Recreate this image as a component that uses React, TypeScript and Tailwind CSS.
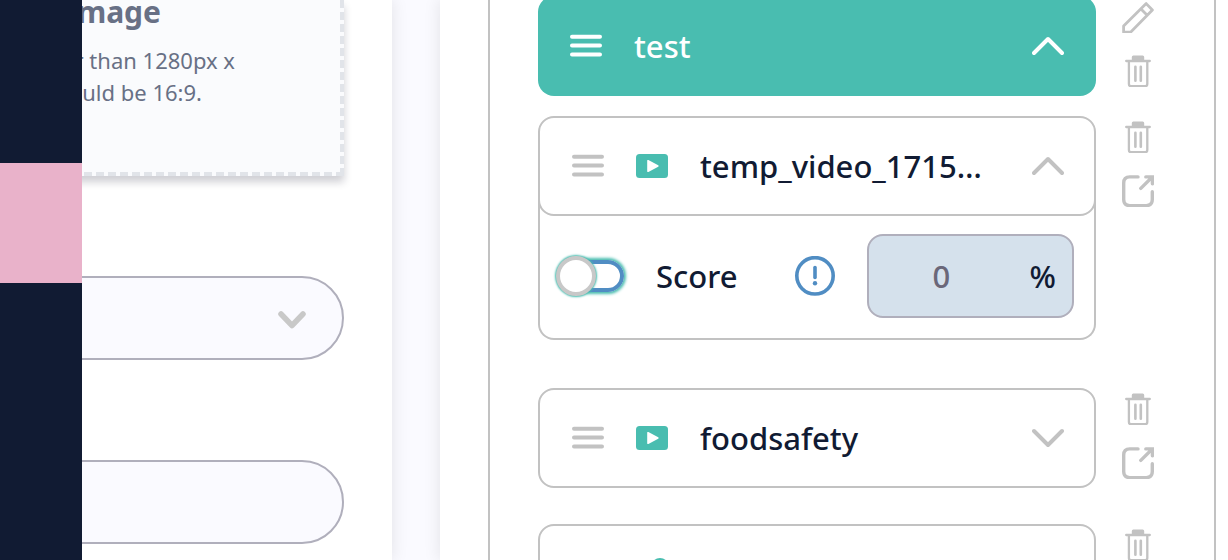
import type { ReactNode } from "react";

function Menu() {
  return (
    <svg width="32" height="24" viewBox="0 0 32 24" fill="none" stroke="currentColor" strokeWidth="4" strokeLinecap="round" className="shrink-0">
      <path d="M2 2.7H30M2 11.6H30M2 20.5H30" />
    </svg>
  );
}

function Video() {
  return (
    <svg width="32" height="24" viewBox="0 0 32 24" className="shrink-0">
      <rect width="32" height="24" rx="3.5" fill="#49bdb0" />
      <path d="M11.2 6.8v10.4a.8.8 0 0 0 1.2.7l9.8-5.2a.8.8 0 0 0 0-1.4l-9.8-5.2a.8.8 0 0 0-1.2.7z" fill="#fff" />
    </svg>
  );
}

function Chevron({ up }: { up?: boolean }) {
  return (
    <svg width="32" height="20" viewBox="0 0 32 20" fill="none" stroke="currentColor" strokeWidth="4" strokeLinecap="round" strokeLinejoin="round">
      <path d={up ? "M2 17L16 3L30 17" : "M2 3L16 17L30 3"} />
    </svg>
  );
}

function Pencil() {
  return (
    <svg width="32" height="32" viewBox="0 0 32 32" fill="none" stroke="currentColor" strokeWidth="2.8" strokeLinejoin="round">
      <path d="M24.2 2.6L30.4 9L8.6 31.2H1.6V25ZM19 8L25.2 14.2" />
    </svg>
  );
}

function Trash() {
  return (
    <svg width="32" height="32" viewBox="0 0 32 32" fill="none" stroke="currentColor" strokeWidth="2.3" strokeLinecap="round">
      <path d="M9.8 5.5V2Q9.8 .5 11.3 .5H20.7Q22.2 .5 22.2 2V5.5Z" fill="currentColor" stroke="none" />
      <path d="M4.2 6H27.8M6.9 6V29Q6.9 31.2 9 31.2H23.2Q25.3 31.2 25.3 29V6" />
      <path d="M13.4 11.8V25.8M18.8 11.8V25.8" strokeWidth="2.6" />
    </svg>
  );
}

function External() {
  return (
    <svg width="32" height="32" viewBox="0 0 32 32" fill="none" stroke="currentColor" strokeWidth="3.4" strokeLinecap="round">
      <path d="M16 1.9H7.8Q1.7 1.9 1.7 8V24.6Q1.7 30.6 7.8 30.6H24.2Q30.3 30.6 30.3 24.6V16.8M23.8 1.9H30.4V8.8M30 2.3L18.8 13.4" />
    </svg>
  );
}

function IconButton({ label, children }: { label: string; children: ReactNode }) {
  return (
    <button type="button" aria-label={label} className="block size-8 text-[#c2c2c2]">
      {children}
    </button>
  );
}

function Lesson({ title, open, icon }: { title: string; open?: boolean; icon: ReactNode }) {
  return (
    <div className="flex h-[100px] items-center rounded-2xl border-2 border-[#c2c2c2] bg-white pr-[30px] pl-8 text-[#c2c2c2]">
      <Menu />
      <span className="ml-8 flex w-8 shrink-0 justify-center">{icon}</span>
      <span className="mr-9 ml-8 min-w-0 flex-1 truncate text-[#111b33]">{title}</span>
      <button type="button" aria-label={open ? "Collapse" : "Expand"} className="shrink-0">
        <Chevron up={open} />
      </button>
    </div>
  );
}

function Row({ children, actions }: { children: ReactNode; actions: ReactNode }) {
  return (
    <div className="flex items-start gap-[26px]">
      <div className="min-w-0 flex-1">{children}</div>
      <div className="flex flex-col gap-[22px] pt-[5px]">{actions}</div>
    </div>
  );
}

const fieldClass = "h-[84px] w-full rounded-full border-2 border-[#b0afbc] bg-[#fafaff] px-10";

export default function App() {
  return (
    <div className="flex h-screen overflow-hidden bg-[#fafaff] font-['Noto_Sans',sans-serif] text-[31px] leading-10 font-medium text-[#111b33]">
      <nav className="relative z-10 w-[82px] shrink-0 bg-[#111b33] pt-[163px]">
        <a href="#course" aria-label="Course" className="block h-[120px] bg-[#e9b2ca]" />
      </nav>

      <section className="flex w-[310px] shrink-0 justify-end bg-white pr-12 shadow-[0_0_16px_rgba(0,0,0,0.1)]">
        <div className="w-[380px] shrink-0">
          <div className="flex h-44 flex-col items-end border-4 border-t-0 border-dashed border-[#e1e4e9] bg-[#fafbfd] text-[22px] leading-8 font-normal whitespace-nowrap text-[#687085] shadow-[0_6px_8px_rgba(17,17,40,0.2)]">
            <h2 className="-mt-2 mb-3 pr-[179px] text-[30px] leading-10 font-bold">Image</h2>
            <p className="pr-[105px]">Larger than 1280px x</p>
            <p className="pr-[138px]">should be 16:9.</p>
          </div>
          <div className="relative mt-[100px]">
            <select aria-label="Category" className={fieldClass + " block appearance-none"} />
            <svg width="28" height="18" viewBox="0 0 28 18" fill="none" stroke="#c8c8c8" strokeWidth="5.5" strokeLinecap="round" strokeLinejoin="round" className="pointer-events-none absolute top-[35px] right-[38px]">
              <path d="M3 3L14 14.5L25 3" />
            </svg>
          </div>
          <input type="text" aria-label="Title" className={fieldClass + " mt-[100px] block"} />
        </div>
      </section>

      <main className="ml-12 min-w-0 flex-1 bg-white pr-3 pl-12 shadow-[0_0_16px_rgba(0,0,0,0.1)]">
        <div className="h-full overflow-hidden border-x-2 border-[#c2c2c2] pr-[60px] pl-12">
          <div className="-mt-1">
            <Row actions={<><IconButton label="Edit"><Pencil /></IconButton><IconButton label="Delete"><Trash /></IconButton></>}>
              <div className="flex h-[100px] items-center rounded-2xl bg-[#49bdb0] px-8 text-white">
                <Menu />
                <span className="ml-8 flex-1">test</span>
                <button type="button" aria-label="Collapse section"><Chevron up /></button>
              </div>
            </Row>
          </div>

          <div className="mt-5">
            <Row actions={<><IconButton label="Delete"><Trash /></IconButton><IconButton label="Open"><External /></IconButton></>}>
              <Lesson title="temp_video_1715763" open icon={<Video />} />
              <div className="-mt-4 flex items-center rounded-b-2xl border-2 border-t-0 border-[#c2c2c2] pt-[34px] pr-5 pb-5 pl-4">
                <label className="flex flex-1 items-center gap-8">
                  <span className="relative flex h-10 w-[68px] items-center">
                    <input type="checkbox" role="switch" className="peer sr-only" />
                    <span className="ml-3 h-8 flex-1 rounded-full border-4 border-[#508dc3] shadow-[0_0_3px_2px_#49bdb0]" />
                    <span className="absolute left-0 size-10 rounded-full border-4 border-[#c8c8c8] bg-white shadow-[0_0_2px_1px_#49bdb0]" />
                  </span>
                  Score
                </label>
                <button type="button" aria-label="About the score">
                  <svg width="40" height="40" viewBox="0 0 40 40" fill="none" stroke="#508dc3" strokeWidth="3.6" strokeLinecap="round">
                    <circle cx="20" cy="19.8" r="18.2" />
                    <path d="M20 11.5V21.5" />
                    <circle cx="20" cy="27.2" r="2.2" fill="#508dc3" stroke="none" />
                  </svg>
                </button>
                <div className="ml-8 flex h-[84px] w-[207px] items-center rounded-2xl border-2 border-[#b0afbc] bg-[#d5e1ec] pr-4">
                  <input type="text" aria-label="Score percent" defaultValue="0" className="min-w-0 flex-1 bg-transparent pr-4 text-center text-[#6a6779]" />
                  <span>%</span>
                </div>
              </div>
            </Row>
          </div>

          <div className="mt-12">
            <Row actions={<><IconButton label="Delete"><Trash /></IconButton><IconButton label="Open"><External /></IconButton></>}>
              <Lesson title="foodsafety" icon={<Video />} />
            </Row>
          </div>

          <div className="mt-9">
            <Row actions={<><IconButton label="Delete"><Trash /></IconButton><IconButton label="Open"><External /></IconButton></>}>
              <Lesson title="" icon={<svg width="32" height="32" viewBox="0 0 32 32"><circle cx="24" cy="9" r="9" fill="#49bdb0" /></svg>} />
            </Row>
          </div>
        </div>
      </main>
    </div>
  );
}
